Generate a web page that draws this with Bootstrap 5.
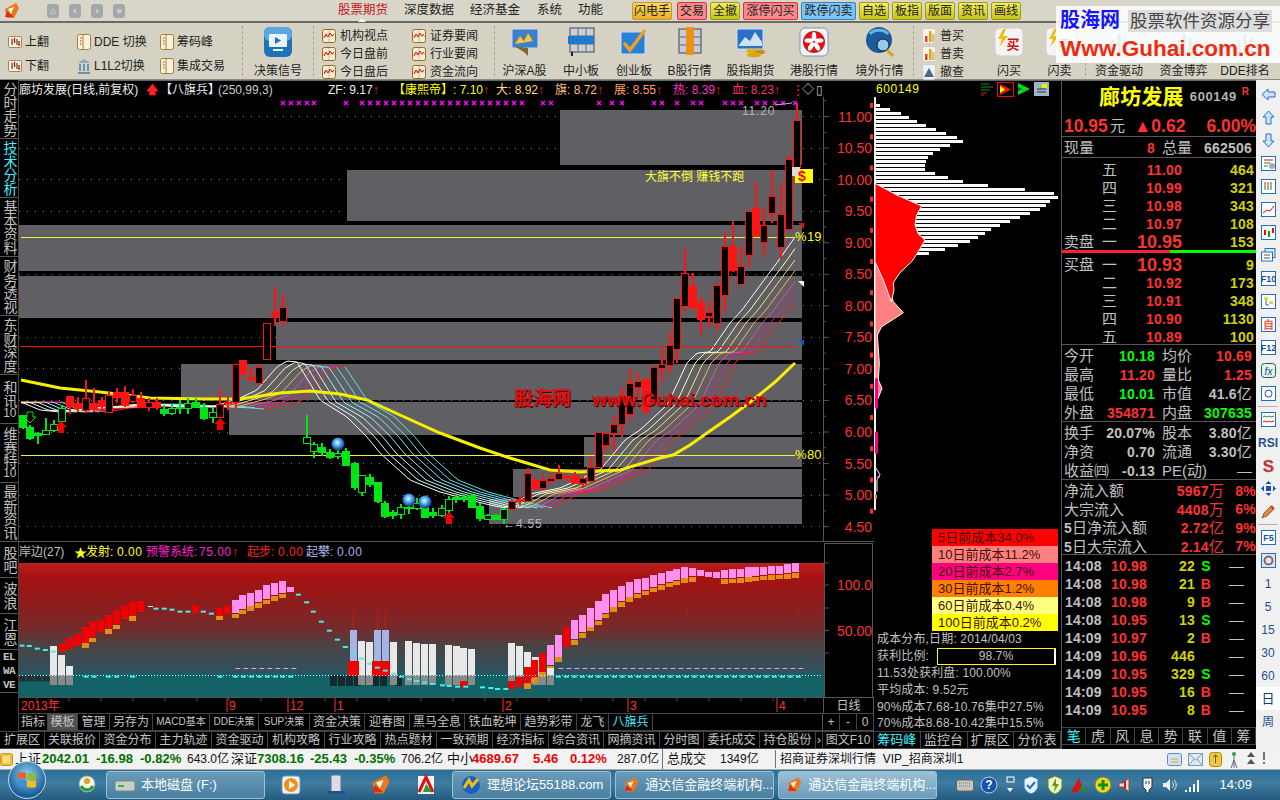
<!DOCTYPE html>
<html lang="zh-CN">
<head>
<meta charset="UTF-8">
<title>通达信金融终端</title>
<link href="https://cdn.jsdelivr.net/npm/bootstrap@5.3.0/dist/css/bootstrap.min.css" rel="stylesheet">
<style>
  html, body { width: 1280px; height: 800px; overflow: hidden; background: #000; }
  body, svg text { font-family: "Liberation Sans", "Noto Sans CJK SC", sans-serif; }
  .app { width: 1280px; height: 800px; position: relative; }

  /* top menu + toolbar */
  .menubar { height: 23px; background: #d8d5c9; border-bottom: 2px solid #6b6b66; font-size: 12.5px; color: #222; }
  .menu-grid { display: grid; grid-template-columns: 47px 291px 66px 66px 67px 41px 54px 1fr; align-items: center; }
  .menu-hot { color: #c8141e; position: relative; }
  .menu-hot::after { content: ""; position: absolute; left: 20px; top: 17px; border: 4px solid transparent; border-bottom-color: #f4f4f0; border-top: 0; }
  .navbtns { gap: 10px; }
  .navbtn { width: 12px; height: 14px; border-radius: 3px; background: #a4a8aa; color: #fff; font-size: 9px; line-height: 14px; text-align: center; }
  .fbtn { height: 18px; line-height: 16px; border: 1px solid #9a9a20; background: linear-gradient(#f2ee60,#c8c414); font-size: 12px; color: #222; text-align: center; white-space: nowrap; border-radius: 2px; }
  .fbtn-o { border-color: #d09030; background: linear-gradient(#f8d860,#e8b020); width: 40px; margin-right: 2px; }
  .fbtn-r { border-color: #e03040; background: #f88a8a; }
  .fbtn-b { border-color: #3080d0; background: #7cc4f4; }
  .fbtn-row { gap: 3px; }
  .w30 { width: 30px; } .w55 { width: 55px; }

  .toolbar { height: 57px; background: #d5d2c4; font-size: 12px; color: #222; border-bottom: 1px solid #8a8a86; }
  .sep { width: 1px; border-left: 1px dashed #a5a399; margin: 3px 0; }
  .tb-a { width: 242px; padding: 6px 0 0 8px; display: grid; grid-template-columns: 69px 83px 1fr; grid-auto-rows: 24px; align-content: center; }
  .tb-b { width: 70px; }
  .tb-c { width: 90px; padding: 5px 0 0 8px; }
  .tb-e { display: grid; grid-template-columns: 59px 54px 52px 59px 63px 64px 67px; }
  .tb-f { width: 70px; padding: 5px 0 0 8px; }
  .tb-g { display: grid; grid-template-columns: 50px 51px; }
  .tb-h { display: grid; grid-template-columns: 66px 63px 60px; }
  .tool { gap: 3px; white-space: nowrap; }
  .tool-big { display: flex; flex-direction: column; align-items: center; justify-content: space-between; padding-top: 3px; line-height: 16px; white-space: nowrap; }
  .tool-line { height: 18px; gap: 4px; white-space: nowrap; }

  /* main area */
  .mainrow { height: 669px; }
  .leftcol { width: 874px; }
  .chartrow { height: 651px; }
  .vtabs { width: 19px; background: #000; border-right: 1px solid #444; }
  .vtab { writing-mode: vertical-rl; text-orientation: upright; color: #c0c0c0; font-size: 14px; line-height: 17px; letter-spacing: -.5px; border-bottom: 1px solid #555; display: flex; align-items: center; justify-content: center; overflow: hidden; }
  .vtab-4 { height: 59px; } .vtab-3 { height: 49px; } .vtab-2 { height: 36px; } .vtab-el { height: 43px; }
  .vtab-on { color: #40f0ff; }
  .tcy { text-combine-upright: all; font-size: 12px; }
  .vstack { writing-mode: horizontal-tb; font-family: "Liberation Mono", monospace; font-size: 11px; line-height: 14px; text-align: center; font-weight: 700; }
  .chartcol { width: 855px; }
  .chart-head { height: 17px; display: grid; grid-template-columns: 127px 14px 58px 110px 65px 103px 59px 59px 59px 59px 60px 10px 14px 14px; align-items: center; font-size: 12px; color: #ccc; white-space: nowrap; border-top: 1px solid #666; }
  .up { color: #ff2020; }
  .c-w { color: #eee; } .c-y { color: #ffff00; } .c-a { color: #ffdc80; } .c-b { color: #ffc070; } .c-c { color: #ffa060; } .c-d { color: #ff30c0; } .c-e { color: #ff3060; }
  .chart-svg { display: block; width: 855px; height: 616px; }

  .tabs-row { height: 18px; display: flex; font-size: 12px; color: #c4c4c4; background: #000; white-space: nowrap; }
  .tabc { border-right: 1px solid #444; border-top: 1px solid #444; border-bottom: 1px solid #444; text-align: center; line-height: 16px; overflow: hidden; }
  .tabc-sm { font-size: 10px; }
  .tabs-a { display: grid; grid-template-columns: 29px 30px 32px 43px 57px 49px 51px 55px 45px 55px 56px 56px 32px 44px 1fr 51px; }
  .tabs-b { display: grid; grid-template-columns: 45px 55px 56px 56px 56px 57px 56px 56px 56px 56px 55px 56px 44px 56px 56px 7px 51px; }
  .tabc-on { color: #40f0ff; }
  .tabc-sel { background: #505050; }
  .tabfill { border-top: 1px solid #444; border-bottom: 1px solid #444; border-right: 1px solid #555; }
  .axisbtn { display: flex; border-top: 1px solid #444; border-bottom: 1px solid #444; }
  .axisbtn span { flex: 1; text-align: center; line-height: 16px; border-right: 1px solid #444; }

  .chipcol { width: 188px; border-right: 1px solid #555; color: #c0c0c0; font-size: 12px; }
  .chip-head { height: 17px; padding-left: 2px; border-top: 1px solid #666; }
  .chip-head b { color: #ffff00; font-weight: 400; letter-spacing: .6px; }
  .chip-icons { margin-left: 60px; gap: 3px; }
  .chip-svg { display: block; width: 187px; height: 432px; }
  .legend { width: 126px; margin-left: 58px; height: 102px; }
  .lg { height: 17px; line-height: 17px; font-size: 13px; color: #401000; padding-left: 6px; white-space: nowrap; }
  .lg1 { background: #ff0000; } .lg2 { background: #ff8080; } .lg3 { background: #ff0080; } .lg4 { background: #ff8000; } .lg5 { background: #ffff80; } .lg6 { background: #ffff00; }
  .chipline { height: 17px; line-height: 17px; padding-left: 3px; white-space: nowrap; letter-spacing: .15px; }
  .profitbox { width: 119px; height: 17px; margin-left: 8px; border: 1px solid #ffff00; border-right: 2px solid #fff; text-align: center; line-height: 15px; }
  .chiplast { height: 15px; line-height: 15px; }
  .chiptabs .tabc { flex: 1; font-size: 13px; }

  /* quote panel */
  .quote { width: 194px; color: #c0c0c0; font-size: 15px; }
  .q-bold { font-weight: 700; font-size: 14px; letter-spacing: .2px; }
  .q-r { color: #ff3232; } .q-g { color: #00ff00; } .q-y { color: #d2d200; } .q-w { color: #c0c0c0; }
  .q-name { height: 33px; padding-left: 37px; border-top: 1px solid #666; }
  .q-name b { color: #ffff00; font-size: 21px; font-weight: 700; letter-spacing: .2px; }
  .q-code { font-size: 13px; font-weight: 700; color: #b4b4b4; margin-left: 6px; letter-spacing: .6px; }
  .q-rr { color: #ff3232; font-size: 10px; font-weight: 700; margin-left: 5px; align-self: flex-start; margin-top: 3px; }
  .q-price { height: 24px; display: grid; grid-template-columns: 46px 24px 63px 1fr; align-items: center; padding-left: 2px; font-size: 17.5px; font-weight: 700; color: #ff3232; border-bottom: 1px solid #555; white-space: nowrap; }
  .q-price i { font-style: normal; font-weight: 400; color: #c0c0c0; font-size: 15px; }
  .q-price span:last-child { text-align: right; }
  .q-vol { height: 21px; display: grid; grid-template-columns: 34px 57px 7px 32px 58px; align-items: center; padding-left: 2px; border-bottom: 1px solid #555; }
  .ta-r { text-align: right; }
  .q-gap { height: 1px; }
  .q-book { height: 18px; display: grid; grid-template-columns: 38px 20px 60px 72px; align-items: center; padding-left: 2px; }
  .q-big { font-size: 18px; font-weight: 700; color: #ff3232; line-height: 18px; }
  .q-split { height: 5px; padding: 1px 0; display: flex; }
  .q-split i { display: block; height: 3px; }
  .q-split .q-sr { width: 108px; background: #ff1e32; } .q-split .q-sg { flex: 1; background: #00ff00; }
  .q-sec { border-top: 1px solid #555; }
  .q-four { height: 19px; display: grid; grid-template-columns: 34px 57px 7px 32px 58px; align-items: center; padding-left: 2px; }
  .q-flow { height: 18.5px; display: grid; grid-template-columns: 96px 64px 32px; align-items: center; padding-left: 2px; }
  .q-tick { height: 18px; display: grid; grid-template-columns: 41px 41px 48px 22px 1fr; align-items: center; padding-left: 3px; }
  .q-tick-box { height: 173px; border-top: 1px solid #555; }
  .qtabs .tabc { flex: 1; font-size: 14px; }
  .q-unit { font-weight: 400; font-size: 15px; }

  /* right icon strip */
  .strip { width: 24px; background: #f0f0f0; }
  .sic { height: 23px; display: flex; align-items: center; justify-content: center; font-size: 12px; color: #1f4f8f; }
  .sic-hr { height: 0; border-top: 1px solid #b0b0b0; margin: 1px 2px; }
  .sic-top { margin-top: 3px; }
  .sic-day { background: #fff; font-size: 13px; color: #123a6b; }

  /* status + taskbar */
  .statusbar { height: 21px; background: #f2f2f2; display: grid; grid-template-columns: 15px 27px 54px 44px 47px 44px 26px 53px 44px 47px 46px 25px 61px 37px 47px 45px 58px 55px 1fr; align-items: center; font-size: 13px; color: #111; white-space: nowrap; border-bottom: 1px solid #aaa; }
  .st-g { color: #007000; font-weight: 700; } .st-r { color: #f00000; font-weight: 700; }
  .st-dim { font-size: 12px; }
  .st-tray { gap: 6px; margin-left: auto; padding-right: 14px; }
  .taskbar { height: 30px; background: linear-gradient(#2a6f98,#3f7c9f 45%,#225a80); color: #fff; font-size: 13px; padding-left: 72px; white-space: nowrap; }
  .orb { position: absolute; left: 8px; bottom: 1px; width: 38px; height: 38px; border-radius: 50%; background: radial-gradient(circle at 50% 35%,#8fd0f0,#1c5f98 70%); border: 1px solid #c0dff0; display: flex; align-items: center; justify-content: center; }
  .task-ic { width: 22px; height: 22px; }
  .task-quick { padding: 0 15px; gap: 23px; }
  .taskbtn { height: 28px; background: linear-gradient(#6a9ab8,#4a80a2); border: 1px solid #9cc0d4; border-radius: 3px; gap: 6px; padding-left: 8px; overflow: hidden; }
  .taskbtn-on { background: linear-gradient(#9cc0d6,#6a9cbb); }
  .tb-w158 { width: 159px; }
  .tray { margin-left: auto; gap: 6px; padding-right: 28px; }
  .clock { margin-left: 12px; font-size: 13px; }

  /* watermark over the toolbar */
  .wmark { position: absolute; right: 0; top: 6px; width: 224px; height: 57px; background: rgba(255,255,255,.86); padding: 0 0 0 4px; }
  .wm-a { color: #1414ff; font-size: 20px; font-weight: 700; line-height: 29px; }
  .wm-b { color: #444; background: #ddd; font-family: "Liberation Serif", "Noto Sans CJK SC", serif; font-size: 17.5px; line-height: 22px; margin-left: 8px; padding: 0 2px; white-space: nowrap; }
  .wm-c { color: #f02a10; font-size: 22.5px; font-weight: 700; line-height: 28px; white-space: nowrap; }
</style>
</head>
<body>

<!-- shared icons -->
<svg width="0" height="0" class="d-block">
  <defs>
    <symbol id="i-doc" viewBox="0 0 14 14"><rect x=".5" y=".5" width="13" height="13" rx="2" fill="#f4eed8" stroke="#9a6a20"/><path d="M7 1v12M1 7h12" stroke="#c89a50" stroke-width=".6"/><path d="M2 9l2-4 2 3 2-4 2 3 2-2" fill="none" stroke="#e01010"/></symbol>
    <symbol id="i-updown" viewBox="0 0 14 14"><rect x=".5" y="1.5" width="13" height="11" rx="1" fill="#f4eed8" stroke="#9a8a60"/><path d="M4 4v6M9 4v6" stroke="#222"/><path d="M6.500 3v5M11 6v5" stroke="#e01010" stroke-width="1.4"/></symbol>
    <symbol id="i-book" viewBox="0 0 14 16"><rect x=".5" y=".5" width="13" height="15" rx="2" fill="#f8f2dc" stroke="#a08040"/><path d="M6 1v14" stroke="#a08040"/><path d="M3 4h1.500M3 7h1.500M3 10h1.500" stroke="#e07010" stroke-width="1.500"/></symbol>
    <symbol id="i-bank" viewBox="0 0 14 16"><path d="M7 1L1 5h12z" fill="#8fa8c4"/><path d="M3 6v7M7 6v7M11 6v7" stroke="#6f90b4" stroke-width="2"/><path d="M1 15h12" stroke="#6f90b4" stroke-width="2"/></symbol>
    <symbol id="i-tv" viewBox="0 0 30 32"><rect x="1" y="1" width="28" height="30" rx="6" fill="#1e73b8"/><rect x="1" y="1" width="28" height="14" rx="6" fill="#5aa8e0"/><rect x="6" y="8" width="18" height="13" rx="1" fill="#e8f4fc"/><path d="M12 11l6 3.500-6 3.500z" fill="#1e73b8"/><path d="M10 24h10" stroke="#e8f4fc" stroke-width="2"/></symbol>
    <symbol id="i-map" viewBox="0 0 30 32"><rect x="2" y="3" width="26" height="19" fill="#3a7fd0" stroke="#cfd8e8"/><path d="M5 18l5-8 4 5 4-8 5 8" fill="#f0c850" stroke="#c89018"/><path d="M4 20l10 6 4 4v-8" fill="#7a6a30"/></symbol>
    <symbol id="i-tile" viewBox="0 0 30 32"><rect x="4" y="2" width="24" height="24" fill="#c8d0d8" stroke="#445"/><path d="M4 10h24M4 18h24M12 2v24M20 2v24" stroke="#667"/><rect x="2" y="10" width="26" height="8" fill="#1e78d0"/><path d="M6 26v4" stroke="#222" stroke-width="2"/></symbol>
    <symbol id="i-check" viewBox="0 0 30 32"><rect x="2" y="6" width="24" height="22" fill="#2a80d8" stroke="#cde"/><path d="M5 17l6 7L26 4" fill="none" stroke="#f0a020" stroke-width="3.500"/></symbol>
    <symbol id="i-tile2" viewBox="0 0 30 32"><rect x="4" y="3" width="22" height="24" fill="#c4ccd4" stroke="#445"/><path d="M4 11h22M4 19h22" stroke="#667"/><rect x="11" y="1" width="8" height="28" fill="#f09018"/></symbol>
    <symbol id="i-coin" viewBox="0 0 30 32"><rect x="1" y="3" width="26" height="20" fill="#2a70c8" stroke="#cde"/><path d="M3 19l6-8 5 4 5-9 7 10v4H3z" fill="#cfe0f0"/><ellipse cx="16" cy="25" rx="6" ry="2.500" fill="#e0b020"/><ellipse cx="24" cy="26" rx="5" ry="2.500" fill="#c89010"/><ellipse cx="18" cy="29" rx="7" ry="2.500" fill="#d8a818"/></symbol>
    <symbol id="i-hk" viewBox="0 0 30 32"><rect x="1" y="2" width="28" height="28" rx="5" fill="#f4f4f4" stroke="#6a9ac0"/><circle cx="15" cy="16" r="11" fill="#e01010"/><g fill="#fff"><ellipse cx="15" cy="10.500" rx="2.300" ry="4.500"/><ellipse cx="20" cy="14.500" rx="4.500" ry="2.300"/><ellipse cx="18" cy="20.500" rx="2.300" ry="4.500" transform="rotate(-30 18 20.500)"/><ellipse cx="12" cy="20.500" rx="2.300" ry="4.500" transform="rotate(30 12 20.500)"/><ellipse cx="10" cy="14.500" rx="4.500" ry="2.300"/></g></symbol>
    <symbol id="i-globe" viewBox="0 0 30 32"><circle cx="14" cy="14" r="13" fill="#1a5a9c"/><path d="M5 8c4-5 14-5 18 0" stroke="#6ab0e0" stroke-width="3" fill="none"/><circle cx="18" cy="19" r="6" fill="#9cc8e8" stroke="#123"/><path d="M22 24l6 6" stroke="#d8a020" stroke-width="3"/></symbol>
    <symbol id="i-flash" viewBox="0 0 30 32"><rect x="1" y="2" width="28" height="28" rx="5" fill="#f4f4f4" stroke="#cfcfcf"/><path d="M9 3L4 13h4l-3 8 9-11H9l3-7z" fill="#f0c010"/></symbol>
    <symbol id="i-buy" viewBox="0 0 14 16"><rect x=".5" y=".5" width="13" height="15" rx="2" fill="#f8f4e8" stroke="#ccc"/><rect x="3" y="8" width="2.500" height="6" fill="#e04030"/><rect x="7" y="3" width="2.500" height="11" fill="#e0a020"/><rect x="10" y="6" width="2.500" height="8" fill="#e0c060"/></symbol>
    <symbol id="i-qry" viewBox="0 0 14 16"><rect x=".5" y=".5" width="13" height="15" rx="2" fill="#eef0f4" stroke="#ccc"/><path d="M2 13l5-9 5 9z" fill="#4a6a8a"/></symbol>
    <symbol id="i-drv" viewBox="0 0 30 32"><rect x="4" y="3" width="22" height="20" fill="#cfe0ee"/><path d="M9 28V14M15 28V8M21 28V12" stroke="#3a9a5a" stroke-width="3"/></symbol>
    <symbol id="i-box" viewBox="0 0 15 15"><rect x=".5" y=".5" width="14" height="14" fill="#fff" stroke="#2070c0"/></symbol>
    <symbol id="i-logo" viewBox="0 0 16 18"><path d="M1 7L12 1l3 5-5 10H3z" fill="#f07818"/><path d="M4 7l6-2-3 7z" fill="#fff"/><path d="M3 9l-2 6h9z" fill="#d83018"/></symbol>
  </defs>
</svg>

<div class="app d-flex flex-column">

  <!-- menu row -->
  <div class="menubar menu-grid">
    <div class="ps-1"><svg width="16" height="18"><use href="#i-logo"/></svg></div>
    <div class="d-flex navbtns"><span class="navbtn">⌂</span><span class="navbtn">‹</span><span class="navbtn">›</span><span class="navbtn">»</span></div>
    <div class="menu-hot">股票期货</div><div>深度数据</div><div>经济基金</div><div>系统</div><div>功能</div>
    <div class="d-flex fbtn-row">
      <div class="fbtn fbtn-o">闪电手</div>
      <div class="fbtn fbtn-r w30">交易</div>
      <div class="fbtn w30">全撤</div>
      <div class="fbtn fbtn-r w55">涨停闪买</div>
      <div class="fbtn fbtn-b w55">跌停闪卖</div>
      <div class="fbtn w30">自选</div>
      <div class="fbtn w30">板指</div>
      <div class="fbtn w30">版面</div>
      <div class="fbtn w30">资讯</div>
      <div class="fbtn w30">画线</div>
    </div>
  </div>

  <!-- toolbar -->
  <div class="toolbar d-flex">
    <div class="tb-a">
      <div class="tool d-flex align-items-center"><svg width="14" height="14"><use href="#i-updown"/></svg>上翻</div>
      <div class="tool d-flex align-items-center"><svg width="14" height="16"><use href="#i-book"/></svg>DDE 切换</div>
      <div class="tool d-flex align-items-center"><svg width="14" height="16"><use href="#i-book"/></svg>筹码峰</div>
      <div class="tool d-flex align-items-center"><svg width="14" height="14"><use href="#i-updown"/></svg>下翻</div>
      <div class="tool d-flex align-items-center"><svg width="14" height="16"><use href="#i-bank"/></svg>L1L2切换</div>
      <div class="tool d-flex align-items-center"><svg width="14" height="16"><use href="#i-book"/></svg>集成交易</div>
    </div>
    <div class="sep"></div>
    <div class="tb-b tool-big"><svg width="30" height="32"><use href="#i-tv"/></svg>决策信号</div>
    <div class="sep"></div>
    <div class="tb-c d-flex flex-column justify-content-center">
      <div class="tool-line d-flex align-items-center"><svg width="14" height="14"><use href="#i-doc"/></svg>机构视点</div>
      <div class="tool-line d-flex align-items-center"><svg width="14" height="14"><use href="#i-doc"/></svg>今日盘前</div>
      <div class="tool-line d-flex align-items-center"><svg width="14" height="14"><use href="#i-doc"/></svg>今日盘后</div>
    </div>
    <div class="tb-c d-flex flex-column justify-content-center">
      <div class="tool-line d-flex align-items-center"><svg width="14" height="14"><use href="#i-doc"/></svg>证券要闻</div>
      <div class="tool-line d-flex align-items-center"><svg width="14" height="14"><use href="#i-doc"/></svg>行业要闻</div>
      <div class="tool-line d-flex align-items-center"><svg width="14" height="14"><use href="#i-doc"/></svg>资金流向</div>
    </div>
    <div class="sep"></div>
    <div class="tb-e">
      <div class="tool-big"><svg width="30" height="32"><use href="#i-map"/></svg>沪深A股</div>
      <div class="tool-big"><svg width="30" height="32"><use href="#i-tile"/></svg>中小板</div>
      <div class="tool-big"><svg width="30" height="32"><use href="#i-check"/></svg>创业板</div>
      <div class="tool-big"><svg width="30" height="32"><use href="#i-tile2"/></svg>B股行情</div>
      <div class="tool-big"><svg width="30" height="32"><use href="#i-coin"/></svg>股指期货</div>
      <div class="tool-big"><svg width="30" height="32"><use href="#i-hk"/></svg>港股行情</div>
      <div class="tool-big"><svg width="30" height="32"><use href="#i-globe"/></svg>境外行情</div>
    </div>
    <div class="sep"></div>
    <div class="tb-f d-flex flex-column justify-content-center">
      <div class="tool-line d-flex align-items-center"><svg width="14" height="16"><use href="#i-buy"/></svg>普买</div>
      <div class="tool-line d-flex align-items-center"><svg width="14" height="16"><use href="#i-buy"/></svg>普卖</div>
      <div class="tool-line d-flex align-items-center"><svg width="14" height="16"><use href="#i-qry"/></svg>撤查</div>
    </div>
    <div class="tb-g">
      <div class="tool-big"><svg width="30" height="32"><use href="#i-flash"/><text x="19" y="23" font-size="13" font-weight="700" fill="#d81010" text-anchor="middle">买</text></svg>闪买</div>
      <div class="tool-big"><svg width="30" height="32"><use href="#i-flash"/><text x="19" y="23" font-size="13" font-weight="700" fill="#1a6a6a" text-anchor="middle">卖</text></svg>闪卖</div>
    </div>
    <div class="sep"></div>
    <div class="tb-h">
      <div class="tool-big"><svg width="30" height="32"><use href="#i-drv"/></svg>资金驱动</div>
      <div class="tool-big"><svg width="30" height="32"><use href="#i-drv"/></svg>资金博弈</div>
      <div class="tool-big"><svg width="30" height="32"><use href="#i-drv"/></svg>DDE排名</div>
    </div>
  </div>

  <!-- main -->
  <div class="mainrow d-flex">
    <div class="leftcol d-flex flex-column">
      <div class="chartrow d-flex">
        <div class="vtabs d-flex flex-column">
          <div class="vtab vtab-4">分时走势</div>
          <div class="vtab vtab-4 vtab-on">技术分析</div>
          <div class="vtab vtab-4">基本资料</div>
          <div class="vtab vtab-4">财务透视</div>
          <div class="vtab vtab-4">东财深度</div>
          <div class="vtab vtab-3">和讯<span class="tcy">10</span></div>
          <div class="vtab vtab-4">维赛特<span class="tcy">10</span></div>
          <div class="vtab vtab-4">最新资讯</div>
          <div class="vtab vtab-2">股吧</div>
          <div class="vtab vtab-2">波浪</div>
          <div class="vtab vtab-2">江恩</div>
          <div class="vtab vtab-el"><div class="vstack">EL<br>WA<br>VE</div></div>
        </div>
        <div class="chartcol">
          <div class="chart-head">
            <div class="c-w">廊坊发展(日线,前复权)</div>
            <div class="up fw-bold">🡅</div>
            <div class="c-w">【八旗兵】</div>
            <div>(250,99,3)</div>
            <div class="c-w">ZF: 9.17<span class="up">↑</span></div>
            <div class="c-y">【康熙帝】: 7.10<span class="up">↑</span></div>
            <div class="c-a">大: 8.92<span class="up">↑</span></div>
            <div class="c-b">旗: 8.72<span class="up">↑</span></div>
            <div class="c-c">展: 8.55<span class="up">↑</span></div>
            <div class="c-d">热: 8.39<span class="up">↑</span></div>
            <div class="c-e">血: 8.23<span class="up">↑</span></div>
            <div class="up">⋮</div>
            <div>◇</div>
            <div>▯</div>
          </div>
          <svg id="chart" class="chart-svg" viewBox="19 97 855 616"></svg>
          <div class="tabs-row tabs-a">
            <div class="tabc">指标</div><div class="tabc tabc-sel">模板</div><div class="tabc">管理</div>
            <div class="tabc">另存为</div><div class="tabc tabc-sm">MACD基本</div><div class="tabc tabc-sm">DDE决策</div><div class="tabc tabc-sm">SUP决策</div>
            <div class="tabc">资金决策</div><div class="tabc">迎春图</div><div class="tabc">黑马全息</div><div class="tabc">铁血乾坤</div><div class="tabc">趋势彩带</div>
            <div class="tabc">龙飞</div><div class="tabc tabc-on">八旗兵</div>
            <div class="tabfill"></div>
            <div class="axisbtn"><span>+</span><span>-</span><span>0</span></div>
          </div>
        </div>
      </div>
      <div class="tabs-row tabs-b">
        <div class="tabc">扩展区</div><div class="tabc">关联报价</div><div class="tabc">资金分布</div><div class="tabc">主力轨迹</div><div class="tabc">资金驱动</div><div class="tabc">机构攻略</div>
        <div class="tabc">行业攻略</div><div class="tabc">热点题材</div><div class="tabc">一致预期</div><div class="tabc">经济指标</div><div class="tabc">综合资讯</div><div class="tabc">网摘资讯</div>
        <div class="tabc">分时图</div><div class="tabc">委托成交</div><div class="tabc">持仓股份</div><div class="tabc">›</div><div class="tabc">图文F10</div>
      </div>
    </div>

    <div class="chipcol d-flex flex-column">
      <div class="chip-head d-flex align-items-center"><b>600149</b>
        <div class="chip-icons d-flex align-items-center">
          <svg width="14" height="14"><path d="M1 2h8M1 5h12M1 8h9" stroke="#1a8a1a"/><path d="M1 11h6M1 13h3" stroke="#e01010"/></svg>
          <svg width="17" height="15"><rect x=".5" y=".5" width="16" height="14" fill="none" stroke="#e01010"/><path d="M3 2l11 5.500L3 13z" fill="#ff1010"/><path d="M3 4l5 3.500-5 3.500z" fill="#ffff00"/></svg>
          <svg width="14" height="14"><path d="M1 1l12 6L1 13z" fill="#00e000"/><path d="M1 5l4 2-4 2z" fill="#1a40d0"/></svg>
          <svg width="15" height="14"><rect width="15" height="14" fill="#9fb4c4"/><rect x="8" y="2" width="5" height="4" fill="#f0f000"/><path d="M3 7h9M3 10h9" stroke="#234"/></svg>
        </div>
      </div>
      <svg id="chips" class="chip-svg" viewBox="874 97 187 432"></svg>
      <div class="legend">
        <div class="lg lg1">5日前成本34.0%</div>
        <div class="lg lg2">10日前成本11.2%</div>
        <div class="lg lg3">20日前成本2.7%</div>
        <div class="lg lg4">30日前成本1.2%</div>
        <div class="lg lg5">60日前成本0.4%</div>
        <div class="lg lg6">100日前成本0.2%</div>
      </div>
      <div class="chipline">成本分布,日期: 2014/04/03</div>
      <div class="chipline d-flex">获利比例:<div class="profitbox">98.7%</div></div>
      <div class="chipline">11.53处获利盘: 100.00%</div>
      <div class="chipline">平均成本: 9.52元</div>
      <div class="chipline">90%成本7.68-10.76集中27.5%</div>
      <div class="chipline chiplast">70%成本8.68-10.42集中15.5%</div>
      <div class="tabs-row chiptabs">
        <div class="tabc tabc-on">筹码峰</div><div class="tabc">监控台</div><div class="tabc">扩展区</div><div class="tabc">分价表</div>
      </div>
    </div>

    <div class="quote d-flex flex-column">
      <div class="q-name d-flex align-items-center"><b>廊坊发展</b><span class="q-code">600149</span><span class="q-rr">R</span></div>
      <div class="q-price"><span>10.95</span><i>元</i><span>▲0.62</span><span>6.00%</span></div>
      <div class="q-vol"><span>现量</span><span class="ta-r q-bold q-r">8</span><span></span><span>总量</span><span class="ta-r q-bold">662506</span></div>
      <div class="q-gap"></div>
      <div class="q-book"><span></span><span>五</span><span class="ta-r q-bold q-r">11.00</span><span class="ta-r q-bold q-y">464</span></div>
      <div class="q-book"><span></span><span>四</span><span class="ta-r q-bold q-r">10.99</span><span class="ta-r q-bold q-y">321</span></div>
      <div class="q-book"><span></span><span>三</span><span class="ta-r q-bold q-r">10.98</span><span class="ta-r q-bold q-y">343</span></div>
      <div class="q-book"><span></span><span>二</span><span class="ta-r q-bold q-r">10.97</span><span class="ta-r q-bold q-y">108</span></div>
      <div class="q-book"><span>卖盘</span><span>一</span><span class="ta-r q-big">10.95</span><span class="ta-r q-bold q-y">153</span></div>
      <div class="q-split"><i class="q-sr"></i><i class="q-sg"></i></div>
      <div class="q-book"><span>买盘</span><span>一</span><span class="ta-r q-big">10.93</span><span class="ta-r q-bold q-y">9</span></div>
      <div class="q-book"><span></span><span>二</span><span class="ta-r q-bold q-r">10.92</span><span class="ta-r q-bold q-y">173</span></div>
      <div class="q-book"><span></span><span>三</span><span class="ta-r q-bold q-r">10.91</span><span class="ta-r q-bold q-y">348</span></div>
      <div class="q-book"><span></span><span>四</span><span class="ta-r q-bold q-r">10.90</span><span class="ta-r q-bold q-y">1130</span></div>
      <div class="q-book"><span></span><span>五</span><span class="ta-r q-bold q-r">10.89</span><span class="ta-r q-bold q-y">100</span></div>
      <div class="q-sec">
        <div class="q-four"><span>今开</span><span class="ta-r q-bold q-g">10.18</span><span></span><span>均价</span><span class="ta-r q-bold q-r">10.69</span></div>
        <div class="q-four"><span>最高</span><span class="ta-r q-bold q-r">11.20</span><span></span><span>量比</span><span class="ta-r q-bold q-r">1.25</span></div>
        <div class="q-four"><span>最低</span><span class="ta-r q-bold q-g">10.01</span><span></span><span>市值</span><span class="ta-r q-bold">41.6<span class="q-unit">亿</span></span></div>
        <div class="q-four"><span>外盘</span><span class="ta-r q-bold q-r">354871</span><span></span><span>内盘</span><span class="ta-r q-bold q-g">307635</span></div>
      </div>
      <div class="q-sec">
        <div class="q-four"><span>换手</span><span class="ta-r q-bold">20.07%</span><span></span><span>股本</span><span class="ta-r q-bold">3.80<span class="q-unit">亿</span></span></div>
        <div class="q-four"><span>净资</span><span class="ta-r q-bold">0.70</span><span></span><span>流通</span><span class="ta-r q-bold">3.30<span class="q-unit">亿</span></span></div>
        <div class="q-four"><span class="text-nowrap">收益㈣</span><span class="ta-r q-bold">-0.13</span><span></span><span class="text-nowrap">PE(动)</span><span class="ta-r">—</span></div>
      </div>
      <div class="q-sec">
        <div class="q-flow"><span>净流入额</span><span class="ta-r q-bold q-r">5967<span class="q-unit">万</span></span><span class="ta-r q-bold q-r">8%</span></div>
        <div class="q-flow"><span>大宗流入</span><span class="ta-r q-bold q-r">4408<span class="q-unit">万</span></span><span class="ta-r q-bold q-r">6%</span></div>
        <div class="q-flow"><span><b class="q-bold">5</b>日净流入额</span><span class="ta-r q-bold q-r">2.72<span class="q-unit">亿</span></span><span class="ta-r q-bold q-r">9%</span></div>
        <div class="q-flow"><span><b class="q-bold">5</b>日大宗流入</span><span class="ta-r q-bold q-r">2.14<span class="q-unit">亿</span></span><span class="ta-r q-bold q-r">7%</span></div>
      </div>
      <div class="q-tick-box" id="ticks"></div>
      <div class="tabs-row qtabs">
        <div class="tabc tabc-on">笔</div><div class="tabc">虎</div><div class="tabc">风</div><div class="tabc">息</div><div class="tabc">势</div><div class="tabc">联</div><div class="tabc">值</div><div class="tabc">筹</div>
      </div>
    </div>

    <div class="strip d-flex flex-column">
      <div class="sic sic-top"><svg width="15" height="13"><path d="M1 6.500L7 1v3h7v5H7v3z" fill="#cfe4fa" stroke="#2070c0"/></svg></div>
      <div class="sic"><svg width="13" height="15"><path d="M6.500 1L12 7H9v7H4V7H1z" fill="#cfe4fa" stroke="#2070c0"/></svg></div>
      <div class="sic"><svg width="13" height="15"><path d="M6.500 14L12 8H9V1H4v7H1z" fill="#cfe4fa" stroke="#2070c0"/></svg></div>
      <div class="sic"><svg width="15" height="15"><use href="#i-box"/><path d="M3 4h9" stroke="#e01010"/><path d="M3 7h6" stroke="#1a8a1a"/><path d="M3 10h4" stroke="#1a8a1a"/><circle cx="11" cy="10" r="3" fill="#aaa"/></svg></div>
      <div class="sic"><svg width="15" height="15"><use href="#i-box"/><path d="M3 4h9M3 8h9" stroke="#e01010" stroke-dasharray="2 1"/><path d="M3 6h9M3 10h9" stroke="#1a8a1a" stroke-dasharray="2 1"/></svg></div>
      <div class="sic"><svg width="15" height="15"><use href="#i-box"/><path d="M2 11l4-3 3 1 4-5" fill="none" stroke="#e01010"/></svg></div>
      <div class="sic"><svg width="15" height="15"><use href="#i-box"/><rect x="3" y="5" width="2" height="5" fill="#e01010"/><rect x="7" y="6" width="2" height="6" fill="#1a8a1a"/><rect x="11" y="3" width="2" height="5" fill="#e01010"/></svg></div>
      <div class="sic"><svg width="15" height="15"><rect x="4" y=".5" width="10" height="9" fill="#dfe8f2" stroke="#2070c0"/><rect x=".5" y="4" width="11" height="9" fill="#fff" stroke="#2070c0"/><path d="M3 7h6M3 10h6" stroke="#555"/></svg></div>
      <div class="sic"><svg width="15" height="15"><use href="#i-box"/><text x="7.500" y="11" font-size="9" font-weight="700" fill="#1a50a0" text-anchor="middle">F10</text></svg></div>
      <div class="sic"><svg width="15" height="15"><use href="#i-box"/><rect x="3" y="3" width="4" height="3" fill="#f0d040"/><rect x="8" y="7" width="4" height="3" fill="#f0d040"/><path d="M5 6v5h3" stroke="#2070c0" fill="none"/></svg></div>
      <div class="sic"><svg width="15" height="15"><use href="#i-box"/><text x="7.500" y="12" font-size="11" font-weight="700" fill="#f06050" text-anchor="middle">自</text></svg></div>
      <div class="sic"><svg width="15" height="15"><use href="#i-box"/><text x="7.500" y="11" font-size="9" font-weight="700" fill="#1a50a0" text-anchor="middle">F12</text></svg></div>
      <div class="sic"><svg width="15" height="15"><rect x=".5" y=".5" width="14" height="14" rx="3" fill="#e8f4e8" stroke="#186060"/><text x="7.500" y="12" font-size="10" font-style="italic" fill="#1a50a0" text-anchor="middle">fx</text></svg></div>
      <div class="sic"><svg width="15" height="15"><use href="#i-box"/><circle cx="7.500" cy="7.500" r="3.500" fill="none" stroke="#1a50a0"/></svg></div>
      <div class="sic-hr"></div>
      <div class="sic"><svg width="15" height="15"><use href="#i-box"/><path d="M2 5l2-1 2 1 2-1 2 1 3-1" fill="none" stroke="#1a8a1a"/><path d="M2 10l2-1 2 1 2-1 2 1 3-1" fill="none" stroke="#e01010"/></svg></div>
      <div class="sic"><span class="fw-bold">RSI</span></div>
      <div class="sic"><svg width="15" height="18"><text x="7.500" y="15" font-size="17" font-weight="700" fill="#e02020" stroke="#888" stroke-width=".4" text-anchor="middle">S</text></svg></div>
      <div class="sic"><svg width="17" height="17"><path d="M8.500 1l3 3h-6zM8.500 16l3-3h-6zM1 8.500l3-3v6zM16 8.500l-3-3v6z" fill="#1a50c0"/><rect x="6" y="6" width="5" height="5" fill="#1a50c0"/></svg></div>
      <div class="sic"><svg width="16" height="16"><path d="M2 14l2-5 7-7 3 3-7 7z" fill="#e88a30" stroke="#864"/><path d="M11 2l3 3" stroke="#c33" stroke-width="2"/></svg></div>
      <div class="sic-hr"></div>
      <div class="sic"><svg width="15" height="15"><use href="#i-box"/><text x="7.500" y="11" font-size="9" font-weight="700" fill="#1a50a0" text-anchor="middle">F5</text></svg></div>
      <div class="sic"><svg width="15" height="15"><rect x=".5" y=".5" width="14" height="14" fill="#dfe8f2" stroke="#2070c0"/><circle cx="7.500" cy="7.500" r="4" fill="none" stroke="#866" stroke-width="2"/></svg></div>
      <div class="sic">1</div><div class="sic">5</div><div class="sic">15</div><div class="sic">30</div><div class="sic">60</div>
      <div class="sic sic-day">日</div>
      <div class="sic">周</div>
    </div>
  </div>

  <div class="statusbar">
    <svg width="13" height="13"><rect x=".5" y=".5" width="12" height="12" rx="2" fill="#f0c040" stroke="#c89020"/><rect x="3" y="3" width="7" height="7" fill="#f8e080"/></svg>
    <span>上证</span><span class="st-g">2042.01</span><span class="st-g">-16.98</span><span class="st-g">-0.82%</span><span class="st-dim">643.0亿</span>
    <span>深证</span><span class="st-g">7308.16</span><span class="st-g">-25.43</span><span class="st-g">-0.35%</span><span class="st-dim">706.2亿</span>
    <span>中小</span><span class="st-r">4689.67</span><span class="st-r">5.46</span><span class="st-r">0.12%</span><span class="st-dim">287.0亿</span>
    <span class="border-start ps-1 border-secondary">总成交</span><span class="st-dim">1349亿</span>
    <div class="d-flex align-items-center border-start border-secondary ps-1 st-dim">招商证券深圳行情&nbsp;&nbsp;VIP_招商深圳1
      <div class="st-tray d-flex align-items-center">
        <svg width="15" height="13"><rect x=".5" y=".5" width="14" height="12" rx="2" fill="#cfe4fa" stroke="#5a8ac0"/><path d="M4 6h7M4 9h7" stroke="#e0a020"/></svg>
        <svg width="15" height="13"><rect x=".5" y=".5" width="14" height="12" fill="#dfeaf6" stroke="#7a9ac0"/><path d="M1 1l6.500 6L14 1M1 12l5-6M14 12l-5-6" stroke="#7a9ac0" fill="none"/></svg>
        <svg width="13" height="15"><rect x=".5" y=".5" width="12" height="14" rx="3" fill="#f0c838" stroke="#b08a10"/><path d="M6.500 3v8M4 5l2.500-2L9 5" stroke="#654" fill="none"/></svg>
        <svg width="12" height="18"><path d="M6 6v12M3 18l3-8 3 8" stroke="#667" fill="none"/><circle cx="6" cy="4" r="2" fill="#3a9a3a"/></svg>
        <svg width="10" height="14"><path d="M5 0L1 5h8zM5 7L1 12h8z" fill="#555"/></svg>
        <svg width="4" height="14"><rect x="1" width="2" height="8" fill="#777"/><rect x="1" y="10" width="2" height="2" fill="#777"/></svg>
      </div>
    </div>
  </div>

  <div class="taskbar d-flex align-items-center">
    <svg class="task-ic me-2 ms-1" viewBox="0 0 22 22"><circle cx="11" cy="10" r="8" fill="#f4f4e8" stroke="#8aa"/><path d="M5 12c3 5 9 5 12 0" fill="none" stroke="#2a9a2a" stroke-width="3"/><circle cx="11" cy="7" r="3" fill="#e0a020"/></svg>
    <div class="taskbtn tb-w158 d-flex align-items-center"><svg width="20" height="14"><rect y="3" width="20" height="10" rx="2" fill="#c8d0c8" stroke="#7a8a7a"/><rect x="3" y="7" width="6" height="2" fill="#4a4"/></svg>本地磁盘 (F:)</div>
    <div class="task-quick d-flex align-items-center">
      <svg class="task-ic" viewBox="0 0 22 22"><rect x="2" y="2" width="18" height="18" rx="3" fill="#eaf2fa" stroke="#6a9ac0"/><circle cx="11" cy="11" r="7" fill="#f09018"/><path d="M9 7l6 4-6 4z" fill="#fff"/></svg>
      <svg class="task-ic" viewBox="0 0 22 22"><rect x="6" y="1" width="10" height="18" fill="#d8dce4" stroke="#667"/><rect x="3" y="17" width="17" height="3" fill="#2a4a8a"/></svg>
      <svg class="task-ic" viewBox="0 0 16 18"><use href="#i-logo"/></svg>
      <svg class="task-ic" viewBox="0 0 22 22"><rect x="3" y="2" width="16" height="18" fill="#f4f4f4"/><path d="M4 18L11 3l7 15" fill="none" stroke="#e01010" stroke-width="3"/><path d="M11 10l6 8H8z" fill="#2a9a3a"/></svg>
    </div>
    <div class="taskbtn tb-w158 d-flex align-items-center"><svg width="20" height="20"><circle cx="10" cy="10" r="9" fill="#1a60c0"/><path d="M3 13l5-8 3 6 6-7" fill="none" stroke="#f0c010" stroke-width="3"/></svg>理想论坛55188.com</div>
    <div class="taskbtn tb-w158 d-flex align-items-center ms-1"><svg width="16" height="18"><use href="#i-logo"/></svg>通达信金融终端机构...</div>
    <div class="taskbtn tb-w158 taskbtn-on d-flex align-items-center ms-1"><svg width="16" height="18"><use href="#i-logo"/></svg>通达信金融终端机构...</div>
    <div class="tray d-flex align-items-center">
      <svg width="18" height="14"><rect x=".5" y="2" width="17" height="11" rx="2" fill="#c8c8c0" stroke="#666"/><path d="M3 5h12M3 8h12" stroke="#777" stroke-dasharray="1 1"/></svg>
      <svg width="18" height="18"><circle cx="9" cy="9" r="8" fill="#1a50b0" stroke="#bcd"/><text x="9" y="13" font-size="12" font-weight="700" fill="#fff" text-anchor="middle">?</text></svg>
      <svg width="12" height="18"><rect x="3" y="1" width="7" height="5" fill="none" stroke="#fff"/><path d="M3 12h6l-3 4z" fill="#fff"/></svg>
      <svg width="18" height="20"><path d="M9 1l7 3v7c0 4-4 7-7 8-3-1-7-4-7-8V4z" fill="#e8f2fc" stroke="#2070c8"/><path d="M5 10l3 3 5-6" fill="none" stroke="#2070c8" stroke-width="2"/></svg>
      <svg width="18" height="20"><path d="M9 1l7 3v7c0 4-4 7-7 8-3-1-7-4-7-8V4z" fill="#f0f0c0" stroke="#5a8a20"/><path d="M10 3l-4 8h3l-1 6 5-8h-3z" fill="#5a9a20"/></svg>
      <svg width="18" height="18"><path d="M1 16L9 2l3 8-4 6z" fill="#e01010"/><path d="M9 14l3-5 5 7z" fill="#1a9a1a"/></svg>
      <svg width="18" height="18"><circle cx="9" cy="9" r="8" fill="#f0d810" stroke="#686"/><path d="M9 4v10M4 9h10" stroke="#1a8a1a" stroke-width="3"/></svg>
      <svg width="16" height="18"><path d="M1 7h4l6-5v14l-6-5H1z" fill="#e8e0d0" stroke="#a33"/><path d="M7 5v8" stroke="#e01010" stroke-width="2"/></svg>
      <svg width="16" height="18"><path d="M3 2h9v9l-3 3v3H6v-3L3 11z" fill="#f4f4f4" stroke="#234"/><path d="M6 5v3M9 5v3" stroke="#234"/></svg>
      <svg width="16" height="16"><path d="M1 6h3l4-4v12l-4-4H1z" fill="#eee"/><path d="M10 5c2 2 2 4 0 6M12 3c3 3 3 7 0 10" fill="none" stroke="#eee"/></svg>
      <svg width="17" height="15"><path d="M1 12h2v2H1zM5 9h2v5H5zM9 6h2v8H9zM13 2h2v12h-2z" fill="#f4f4f4"/></svg>
      <span class="clock">14:09</span>
    </div>
  </div>
  <div class="orb">
    <svg width="20" height="18"><path d="M1 2c3-1 5-1 8 0v6c-3-1-5-1-8 0z" fill="#e8602a"/><path d="M10 2c3 1 6 1 9 0v6c-3 1-6 1-9 0z" fill="#8ac030"/><path d="M1 9c3-1 5-1 8 0v7c-3-1-5-1-8 0z" fill="#3a90e0"/><path d="M10 9c3 1 6 1 9 0v7c-3 1-6 1-9 0z" fill="#f0c020"/></svg>
  </div>

  <div class="wmark">
    <div class="d-flex align-items-center"><span class="wm-a">股海网</span><span class="wm-b">股票软件资源分享</span></div>
    <div class="wm-c">Www.Guhai.com.cn</div>
  </div>
</div>

<script src="https://cdn.jsdelivr.net/npm/bootstrap@5.3.0/dist/js/bootstrap.bundle.min.js"></script>
<script>
  // ---- helpers, every coordinate below is a window coordinate ----
  const rc = (x, y, w, h, f, more = "") => `<rect x="${x}" y="${y}" width="${w}" height="${h}" fill="${f}" ${more}/>`;
  const ln = (a, b, c, d, s, w = 1, more = "") => `<line x1="${a}" y1="${b}" x2="${c}" y2="${d}" stroke="${s}" stroke-width="${w}" ${more}/>`;
  const tx = (x, y, s, f, size = 13, more = "") => `<text x="${x}" y="${y}" fill="${f}" font-size="${size}" ${more}>${s}</text>`;
  const RED = "#ff1414", GREEN = "#00e614";
  const priceY = p => 116.5 + (11 - p) * 63.1;

  let out = `<defs>
    <linearGradient id="subbg" x1="0" y1="0" x2="0" y2="1">
      <stop offset="0" stop-color="#bc1e1e"/><stop offset=".1" stop-color="#a81212"/>
      <stop offset=".3" stop-color="#8e1c1c"/><stop offset=".5" stop-color="#722c2c"/>
      <stop offset=".62" stop-color="#4a4444"/><stop offset=".8" stop-color="#30505c"/>
      <stop offset=".84" stop-color="#136266"/><stop offset="1" stop-color="#136266"/>
    </linearGradient>
    <radialGradient id="ball" cx=".45" cy=".4" r=".6"><stop offset="0" stop-color="#e8ffff"/><stop offset=".5" stop-color="#40a0f0"/><stop offset="1" stop-color="#0a3080"/></radialGradient>
    <clipPath id="ribclip"><rect x="19" y="97" width="777" height="444"/></clipPath>
  </defs>`;

  // dotted grid
  for (let p = 4.5; p <= 11; p += .5) out += ln(19, priceY(p), 823, priceY(p), "#777", 1, 'stroke-dasharray="1 7" shape-rendering="crispEdges"');

  // grey bands
  [[560,110,802,165],[347,170,802,221],[19,225,802,271],[19,276,802,318],[276,322,802,360],[181,364,802,400],[229,402,802,435],[584,437,802,467],[513,469,802,497],[489,499,802,524]]
    .forEach(b => out += rc(b[0], b[1], b[2]-b[0], b[3]-b[1], "#606064"));

  // ribbon: one curve delayed per line, colour by direction
  const key = [[-60,404],[21,402],[40,410],[60,412],[80,408],[110,407],[140,404],[180,407],[215,406],[240,398],[257,390],[263,383],[277,367],[287,361],[297,362],[320,400],[347,417],[367,437],[380,453],[410,480],[440,492],[470,500],[490,505],[505,508],[530,494],[560,488],[600,470],[625,440],[640,430],[653,418],[667,405],[673,393],[687,363],[697,353],[710,352],[730,323],[742,310],[770,272],[779,260],[795,237]];
  const curve = x => { for (let i = 1; i < key.length; i++) if (x <= key[i][0]) { const a = key[i-1], b = key[i]; return a[1] + (b[1]-a[1]) * (x-a[0]) / (b[0]-a[0]); } return key[key.length-1][1]; };
  // near the first peak the later lines top out lower
  const lineY = (x, j) => curve(x - 8*j) + j * 1.5 * Math.exp(-Math.pow((x - 310) / 45, 2));
  const warm = ["#ffffff","#ffffc0","#ffe080","#ffb060","#ff40a0","#ff1090","#ff2020"];
  const cool = ["#ffffff","#e0ffff","#c0ffff","#a0f0ff","#80e8ff","#60e0f0","#60e0e0"];
  out += '<g clip-path="url(#ribclip)" fill="none" stroke-width="1">';
  for (let j = 6; j >= 0; j--) for (let x = 21; x < 795; x += 3) {
    const a = lineY(x, j), b = lineY(x + 3, j);
    out += ln(x, a, x+3, b, b <= a ? warm[j] : cool[j]);
  }
  out += "</g>";

  // long yellow average
  out += `<polyline fill="none" stroke="#f4f000" stroke-width="3" points="21,380 60,388 100,392 150,398 205,399 240,399 280,393 310,391 340,394 367,400 400,415 440,433 480,448 510,458 550,470 580,472 620,470 660,458 673,455 690,445 707,433 730,417 753,400 775,382 795,363"/>`;

  // level lines
  out += ln(21, 237.5, 795, 237.5, "#f0f040") + ln(21, 455.5, 795, 455.5, "#f0f040") + ln(21, 346.5, 795, 346.5, "#ff1010");
  out += tx(795, 241, "%", "#ffff00", 13) + tx(807, 241, "19.", "#ffff00", 13);
  out += tx(795, 459, "%", "#ffff00", 13) + tx(807, 459, "80.", "#ffff00", 13);

  // candles: x, high, body top, body bottom, low, kind (r red, h hollow red, g green, o hollow green)
  const candles = [
    [796,103,120,167,178,"h"],[788,156,159,229,229,"h"],[780,183,214,247,259,"h"],[771,170,196,213,223,"h"],[763,207,225,242,257,"h"],[755,182,208,235,237,"r"],[748,211,211,255,267,"h"],[740,247,266,284,284,"h"],[732,221,246,270,272,"r"],[724,232,246,295,311,"h"],[716,283,285,323,331,"h"],[708,302,312,316,328,"h"],[700,296,302,319,335,"r"],[692,273,286,307,311,"r"],[684,248,273,306,311,"h"],[676,298,298,349,363,"h"],[669,333,345,365,374,"h"],[661,349,364,368,382,"h"],[653,367,367,402,405,"h"],[645,379,379,411,414,"r"],[637,372,381,387,398,"h"],[629,369,383,414,420,"h"],[621,387,395,424,437,"h"],[613,416,424,433,452,"h"],[605,432,433,445,450,"h"],[598,432,432,467,467,"h"],[590,457,467,481,481,"h"],[582,477,478,483,488,"h"],[574,472,475,483,484,"r"],[566,473,476,477,482,"r"],[558,465,473,479,480,"h"],[550,473,478,481,483,"h"],[542,475,480,488,490,"h"],[534,477,480,488,490,"r"],[527,468,473,501,502,"h"],[519,497,499,501,505,"r"],[511,499,501,509,510,"h"],
    [503,508,509,519,524,"o"],[495,514,515,519,520,"g"],[487,514,515,519,520,"o"],[479,503,506,518,521,"g"],[471,494,495,507,508,"g"],[463,494,497,499,502,"g"],[455,495,497,499,503,"g"],[448,496,499,510,513,"o"],[441,505,508,515,517,"o"],[432,508,512,515,518,"g"],[424,500,502,517,518,"g"],[416,498,503,508,510,"o"],[408,497,507,508,514,"g"],[400,504,507,514,519,"o"],[392,510,512,515,519,"g"],[384,501,503,516,518,"g"],[377,482,482,501,503,"g"],[369,474,477,484,487,"g"],[361,475,475,492,496,"o"],[354,462,463,487,490,"g"],[345,448,451,465,466,"g"],[337,445,453,456,459,"o"],[329,449,452,457,459,"g"],[321,443,447,452,456,"g"],[313,442,444,451,458,"o"],[306,415,437,443,444,"o"],
    [282,294,307,321,327,"h"],[274,287,312,316,326,"r"],[266,323,323,359,359,"h"],[258,365,367,383,385,"h"],[250,367,377,379,382,"r"],[242,360,360,373,378,"r"],[235,364,364,402,408,"h"],[227,397,402,403,410,"r"],[219,389,404,417,417,"h"],
    [212,407,412,417,423,"o"],[203,403,407,418,420,"g"],[195,398,402,407,408,"g"],[187,398,403,408,414,"o"],[179,400,407,408,414,"g"],[171,404,408,413,415,"o"],[163,405,409,413,416,"g"],[156,398,402,407,410,"r"],[148,398,402,407,411,"h"],[140,392,398,407,408,"r"],[132,389,395,401,403,"h"],[124,386,392,405,407,"r"],[116,388,392,397,403,"r"],[108,392,395,412,413,"h"],[101,397,400,406,411,"r"],[93,388,403,409,412,"r"],[85,380,398,410,413,"h"],[77,397,403,408,412,"r"],[69,396,396,406,414,"r"],
    [61,405,408,421,421,"o"],[53,420,424,430,432,"o"],[45,418,430,434,435,"o"],[37,432,433,435,444,"g"],[29,425,427,438,440,"g"],[22,415,415,427,429,"g"]
  ];
  candles.forEach(c => {
    const col = c[5] === "r" || c[5] === "h" ? RED : GREEN;
    const hollow = c[5] === "h" || c[5] === "o";
    out += rc(c[0]-.5, c[1], 2, c[4]-c[1], col, 'shape-rendering="crispEdges"');
    out += `<rect x="${c[0]-3}" y="${c[2]}" width="7" height="${Math.max(c[3]-c[2],1.5)}" fill="${hollow ? "#000" : col}" stroke="${col}" shape-rendering="crispEdges"/>`;
  });

  // markers on the candles
  const bigArrow = (x, y) => `<path d="M${x} ${y}l6 6h-3v6h-6v-6h-3z" fill="#f00000"/>`;
  out += bigArrow(61, 421) + bigArrow(220, 418) + bigArrow(449, 512);
  out += `<path d="M27 412h6v5h3l-6 6-6-6h3z" fill="none" stroke="#00e000"/>`;
  [[338,444],[409,500],[425,502]].forEach(p => out += `<circle cx="${p[0]}" cy="${p[1]}" r="6.5" fill="url(#ball)"/>`);

  // magenta crosses over the chart
  const cross = x => `<path d="M${x-2} 101l4 4m0-4l-4 4" stroke="#ff00ff" stroke-width="1.5"/>`;
  [283,291,299,307,314,346,362,370,378,386,394,402,410,418,426,434,442,450,458,466,474,482,490,498,506,514,522,543,551,599,612,622,654,662,677,693,701,725,733,741,757,765,775,783,795].forEach(x => out += cross(x));

  // chart captions
  out += tx(742, 115, "11.20", "#b4b4b4", 12, 'letter-spacing=".8"') + ln(775, 105, 792, 103, "#bbb");
  out += tx(503, 528, "←", "#ccc", 12) + tx(516, 528, "4.55", "#b4b4b4", 12, 'letter-spacing=".8"');
  out += tx(645, 181, "大旗不倒 赚钱不跑", "#ffff40", 12);
  out += rc(795, 169, 18, 14, "#ffff00") + rc(792, 167, 8, 9, "#e8d8d0") + tx(798, 181, "$", "#e01010", 14, 'font-weight="700"');
  out += `<path d="M798 223h6v6z" fill="#e01010"/><path d="M798 281h6v6z" fill="#f4f4f4"/><path d="M798 340h6v6z" fill="#1a50d0"/>`;
  out += tx(514, 405, "股海网", "#400", 19, 'font-weight="700" transform="translate(1 1)"') + tx(514, 405, "股海网", "#e01010", 19, 'font-weight="700"');
  out += tx(592, 406, "www.Guhai.com.cn", "#400", 19, 'font-weight="700" transform="translate(1 1)"') + tx(592, 406, "www.Guhai.com.cn", "#e01010", 19, 'font-weight="700"');

  // price axis
  out += ln(823.5, 97, 823.5, 541, "#555");
  for (let p = 4.5; p <= 11.25; p += .25) out += ln(823, priceY(p), Math.round(p*2) === p*2 ? 829 : 826, priceY(p), "#555");
  for (let p = 11; p >= 4.5; p -= .5) out += tx(872, priceY(p) + 5, p.toFixed(2), "#ff3232", 14, 'text-anchor="end"');
  for (let y = 103; y < 535; y += 31.2) out += rc(870, y, 3, 5, "#ff2828");
  out += ln(19, 541.5, 874, 541.5, "#555");

  // sub chart header
  out += tx(19, 556, "岸边(27)", "#c0c0c0", 12);
  out += tx(74, 557, "★", "#ffff20", 13) + tx(86, 556, "发射:", "#ffff20", 12) + tx(117, 556, "0.00", "#ffff20", 12, 'letter-spacing=".5"');
  out += tx(146, 556, "预警系统:", "#ff20d0", 12) + tx(199, 556, "75.00", "#ff20d0", 12, 'letter-spacing=".5"') + tx(232, 556, "↑", "#ff2020", 13);
  out += tx(247, 556, "起步:", "#ff2020", 12) + tx(278, 556, "0.00", "#ff2020", 12, 'letter-spacing=".5"');
  out += tx(306, 556, "起攀:", "#a8b4e8", 12) + tx(337, 556, "0.00", "#a8b4e8", 12, 'letter-spacing=".5"');

  // sub chart body
  out += rc(19, 563, 805, 134, "url(#subbg)");
  const z9x = u => u/3, z10x = u => 440 + u/3, vy = v => 400 + v/3;
  const dark = "#14292e";
  [1000,1024,1048,1072,1125,1149,1196].forEach(u => out += rc(z9x(u)-3.5, vy(826), 7, 11, dark, 'shape-rendering="crispEdges"'));
  [66,90,114,138].forEach(u => out += rc(z9x(u)-3.5, vy(826), 7, 6, "#252e30"));
  const pale = (x, top, color) => {
    out += rc(x-3.5, vy(top), 7, vy(826)-vy(top), color, 'shape-rendering="crispEdges"');
    out += rc(x-3.5, vy(826), 7, 10, "#8a8a8a", 'shape-rendering="crispEdges"');
  };
  [[160,738],[184,765],[208,798],[1085,723],[1108,726],[1179,726],[1226,723],[1250,729],[1274,732],[1298,732]].forEach(b => pale(z9x(b[0]), b[1], "#e8e8e8"));
  [[25,735],[50,738],[71,743],[95,747],[215,728],[238,738],[262,755],[285,770],[308,785],[331,805]].forEach(b => pale(z10x(b[0]), b[1], "#e8e8e8"));
  [1060,1133,1156].forEach(u => { out += rc(z9x(u)-3.5, vy(690), 7, 31, "#a4b4e4", 'shape-rendering="crispEdges"'); out += rc(z9x(u)-.5, vy(632), 1, 19, "#e01010"); });
  out += rc(z9x(1044), vy(783), 11, 15, "#f00000") + rc(z9x(1116), vy(783), 18, 15, "#f00000");

  const stack = (x, a, b, c, col) => {
    out += rc(x-3.5, vy(a), 7, (b-a)/3, col, 'shape-rendering="crispEdges"');
    if (c) out += rc(x-3.5, vy(b+2), 7, (c-b-2)/3, "#e09010", 'shape-rendering="crispEdges"');
  };
  [[186,730,755],[208,714,748],[232,702,737],[256,681,728,744],[278,666,712,726],[302,660,695],[326,645,685,702],[350,630,672,687],[374,618,657],[398,606,647,663],[422,603,635],[587,615,638],[658,624,647,660],[682,618,641]]
    .forEach(b => stack(z9x(b[0]), b[1], b[2], b[3], "#f00000"));
  [[706,600,640,654],[728,585,627,642],[752,579,617,633],[776,570,607,623],[800,555,597,612],[824,549,585,603],[848,543,580,594],[872,561,576]]
    .forEach(b => stack(z9x(b[0]), b[1], b[2], b[3], "#ff90f0"));
  [[1067,490,517,533],[1043,492,520,537],[1019,498,522,537],[993,498,522,539],[971,502,525,540],[946,502,528,543],[925,502,530,546],[901,506,532,548],[877,507,534,549],[853,510,535,551],[829,516,533],[805,516,530],[781,510,527],[757,504,529,545],[733,501,533,548],[709,506,540,555],[688,513,547,561],[664,518,553,570],[640,525,561,575],[616,533,570,585],[592,537,579,594],[568,546,590,605],[544,558,603,620],[520,570,620,635],[496,582,640,654],[475,603,660,675],[451,624,680,693],[427,645,697,714],[403,660,717,735],[355,705,770,785],[331,735,795,805]]
    .forEach(b => stack(z10x(b[0]), b[1], b[2], b[3], "#ff90f0"));
  [[379,682,742],[307,760,815,830],[283,780,832,848],[262,800,850,866],[237,830,862],[214,843,867],[70,843,860]]
    .forEach(b => stack(z10x(b[0]), b[1], b[2], b[3], "#f00000"));

  // zero line and dash series
  out += ln(19, 675.5, 823, 675.5, "#f0f0f0", 1, 'stroke-dasharray="1 2" shape-rendering="crispEdges"');
  for (let u = 706; u < 880; u += 24) out += rc(z9x(u), vy(804), 5, 1, "#ff90e8");
  for (let u = 355; u < 1080; u += 24) out += rc(z10x(u), vy(804), 5, 1, "#ff90e8");
  const cy = "#40f0f0";
  [[66,734],[88,735],[112,743],[136,747],[160,752],[468,623],[493,623],[516,626],[540,632],[564,632],[610,632],[634,638],[895,581],[920,604],[940,632],[964,662],[988,689],[1012,716],[1036,738],[1060,757],[1084,773],[1108,788],[1132,800],[1156,809],[1180,818],[1204,827],[1228,835],[1250,840],[1274,845],[1298,849],[258,827],[282,827],[325,827],[350,827],[398,827],[660,827],[706,827],[730,827],[754,827],[778,827],[802,827],[826,827],[848,827],[872,827]]
    .forEach(d => out += rc(z9x(d[0])-2.5, vy(d[1]), 5, 2, cy));
  for (let u = 355; u < 1080; u += 24) out += rc(z10x(u)-2.5, vy(827), 5, 2, cy);
  out += rc(148, 606, 5, 1, "#f4f4f4");
  [[0,853],[20,855],[45,857],[70,857],[120,859],[145,861],[165,864],[190,864]].forEach(d => out += rc(z10x(d[0]), vy(d[1]), 5, 2, cy));
  [740,1073].forEach(u => out += tx(z10x(u)-3, vy(640), "↓", "#e01010", 10));

  // sub axis box
  out += `<rect x="824.5" y="543.5" width="48" height="154" fill="#000" stroke="#555"/>`;
  out += tx(872, 590, "100.0", "#ff3232", 14, 'text-anchor="end"') + tx(872, 636, "50.00", "#ff3232", 14, 'text-anchor="end"');
  out += ln(823, 563, 829, 563, "#555") + ln(823, 585, 829, 585, "#555") + ln(823, 608, 829, 608, "#555") + ln(823, 630.5, 829, 630.5, "#555") + ln(823, 653, 829, 653, "#555");

  // date axis
  out += ln(19, 697.5, 874, 697.5, "#555");
  for (let x = 37; x < 823; x += 32) out += ln(x, 698, x, 701, "#555");
  out += tx(21, 710, "2013年", "#ff3232", 12);
  [[229,"9"],[290,"12"],[337,"1"],[505,"2"],[630,"3"],[779,"4"]].forEach(d => { out += ln(d[0]-2, 698, d[0]-2, 712, "#ff3232") + tx(d[0], 710, d[1], "#ff3232", 12); });
  out += ln(823.5, 698, 823.5, 713, "#555") + ln(873.5, 698, 873.5, 713, "#555");
  out += tx(848.5, 710, "日线", "#c0c0c0", 12, 'text-anchor="middle"');
  document.getElementById("chart").innerHTML = out;

  // ---- chip distribution ----
  let chip = ln(875, 97, 875, 510, "#f0f0f0", 2);
  const cx = u => 870 + u/3, chy = v => 80 + v/3;
  const prof = [[70,25],[95,90],[120,140],[145,200],[170,265],[180,278],[200,215],[225,175],[262,160],[270,175],[290,240],[305,300],[320,415],[330,540],[345,570],[360,540],[380,520],[400,470],[420,420],[440,370],[460,340],[480,300],[500,240],[520,160]];
  const profAt = v => { for (let i = 1; i < prof.length; i++) if (v <= prof[i][0]) { const a = prof[i-1], b = prof[i]; return a[1] + (b[1]-a[1]) * (v-a[0]) / (b[0]-a[0]); } return 0; };
  for (let y = 104; y < 254; y += 4) chip += rc(875, y, cx(profAt((y-80)*3)) - 875, 3, "#fafafa", 'shape-rendering="crispEdges"');
  const poly = (pts, fill) => `<polygon points="${pts.map(p => cx(p[0]) + "," + chy(p[1])).join(" ")}" fill="${fill}" stroke="#fafafa" stroke-width="1"/>`;
  chip += poly([[15,540],[45,600],[62,640],[70,665],[100,698],[70,718],[35,740],[22,765],[28,850],[25,900],[36,925],[20,965],[15,1000]], "#ff8080");
  chip += poly([[15,310],[80,345],[155,378],[140,405],[135,435],[145,462],[165,480],[145,515],[125,545],[90,578],[70,608],[72,630],[64,665],[40,600],[15,545]], "#ff0000");
  chip += rc(875, chy(895), 3, 30, "#ff0080") + rc(875, chy(1055), 3, 22, "#ff0080") + rc(877, chy(1188), 3, 2, "#ff0080") + rc(875, chy(1245), 2, 4, "#ff8000");
  chip += `<path d="M${cx(15)} ${chy(1160)}l${5} 8-${3} 5v12" fill="none" stroke="#fafafa"/>`;
  document.getElementById("chips").innerHTML = chip;

  // ---- tick list ----
  const ticks = [["14:08","10.98","22","S"],["14:08","10.98","21","B"],["14:08","10.98","9","B"],["14:08","10.95","13","S"],["14:09","10.97","2","B"],["14:09","10.96","446",""],["14:09","10.95","329","S"],["14:09","10.95","16","B"],["14:09","10.95","8","B"]];
  document.getElementById("ticks").innerHTML = ticks.map(t =>
    `<div class="q-tick"><span class="q-bold">${t[0]}</span><span class="ta-r q-bold q-r">${t[1]}</span><span class="ta-r q-bold q-y">${t[2]}</span><span class="text-center q-bold ${t[3] === "S" ? "q-g" : "q-r"}">${t[3]}</span><span class="text-center">—</span></div>`
  ).join("");
</script>
</body>
</html>
